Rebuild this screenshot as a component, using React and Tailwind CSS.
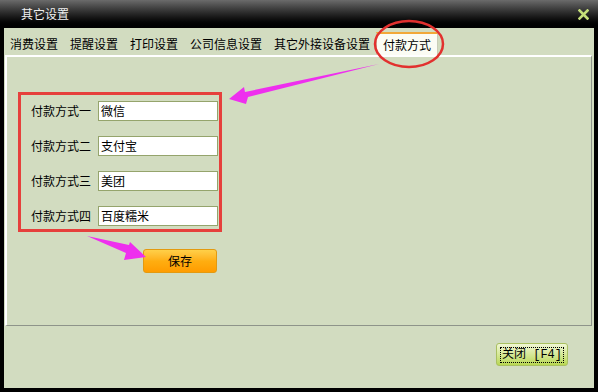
import React from 'react';

const tabs = ['消费设置', '提醒设置', '打印设置', '公司信息设置', '其它外接设备设置', '付款方式'];

const payments = [
    { label: '付款方式一', value: '微信' },
    { label: '付款方式二', value: '支付宝' },
    { label: '付款方式三', value: '美团' },
    { label: '付款方式四', value: '百度糯米' },
];

const font = { fontFamily: '"Noto Sans CJK SC", "Noto Sans", sans-serif' };

const App = () => {
    return (
        <div className="relative w-[598px] h-[392px] bg-black flex flex-col text-[12px] text-black leading-none" style={font}>
            {/* title bar */}
            <div className="h-[28px] flex items-center justify-between pl-[21px] pr-[9px] bg-gradient-to-b from-[#6b6b6b] via-[#262626] to-[#000000]">
                <span className="text-[#f0f0f0] text-[12px]">其它设置</span>
                <svg width="11" height="11" viewBox="0 0 11 11">
                    <path d="M1.5 1.5 L9.5 9.5 M9.5 1.5 L1.5 9.5" stroke="#c7e07a" strokeWidth="2.6" strokeLinecap="square" />
                </svg>
            </div>

            <div className="flex-1 mx-[4px] mb-[4px] bg-[#d2dcc0] flex flex-col">
                {/* tabs */}
                <div className="h-[27px] flex items-end">
                    {tabs.map((t, i) => {
                        const active = i === tabs.length - 1;
                        return (
                            <div
                                key={t}
                                className={
                                    active
                                        ? 'h-[24px] px-[6px] flex items-center bg-[#fbfcf4] border-t-2 border-[#f2a838] border-x border-x-[#c9ceb8] -mb-[1px]'
                                        : 'h-[24px] px-[6px] flex items-center pt-[1px]'
                                }
                            >
                                {t}
                            </div>
                        );
                    })}
                </div>

                {/* panel */}
                <div className="h-[271px] ml-[1px] mr-[2px] border-l-2 border-t-2 border-l-white border-t-white border-r border-b border-r-[#8e948a] border-b-[#8e948a] flex flex-col items-start">
                    <div className="mt-[35px] ml-[11px] w-[204px] h-[140px] border-[3px] border-[#e6403c] pt-[6px] pl-[10px] flex flex-col gap-[15px]">
                        {payments.map((p) => (
                            <div key={p.label} className="flex items-center h-[20px]">
                                <span className="w-[67px]">{p.label}</span>
                                <div className="w-[120px] h-[20px] bg-white border border-[#95a46c] flex items-center pl-[2px]">
                                    {p.value}
                                </div>
                            </div>
                        ))}
                    </div>
                    <button className="mt-[17px] ml-[136px] w-[74px] h-[24px] rounded-[3px] border border-[#e39a10] bg-gradient-to-b from-[#ffd048] via-[#ffae10] to-[#ff9c00] text-[12px] flex items-center justify-center">
                        保存
                    </button>
                </div>

                {/* footer */}
                <div className="flex-1 flex justify-end items-start pt-[17px] pr-[26px]">
                    <button className="w-[72px] h-[23px] rounded-[3px] border border-[#a9c060] bg-gradient-to-b from-[#f0f6d4] via-[#d6e896] to-[#b9d850] flex items-center justify-center">
                        <span
                            className="border border-dotted border-black px-[1px] h-[16px] flex items-center text-[12px] whitespace-pre"
                            style={{ fontFamily: '"Liberation Mono", "Noto Sans CJK SC", monospace' }}
                        >
                            关闭 [F4]
                        </span>
                    </button>
                </div>
            </div>

            {/* annotation layer */}
            <svg className="absolute left-0 top-0 pointer-events-none" width="598" height="392" viewBox="0 0 598 392">
                <ellipse cx="409" cy="44" rx="34" ry="23" fill="none" stroke="#e2302e" strokeWidth="2.5" />
                <polygon points="229,99 244,87 245,92 379,64 248,97 246,104" fill="#ee2fee" />
                <polygon points="87,236 129,245 130,242 146,257 124,260 126,253" fill="#ee2fee" />
            </svg>
        </div>
    );
};

export default App;
